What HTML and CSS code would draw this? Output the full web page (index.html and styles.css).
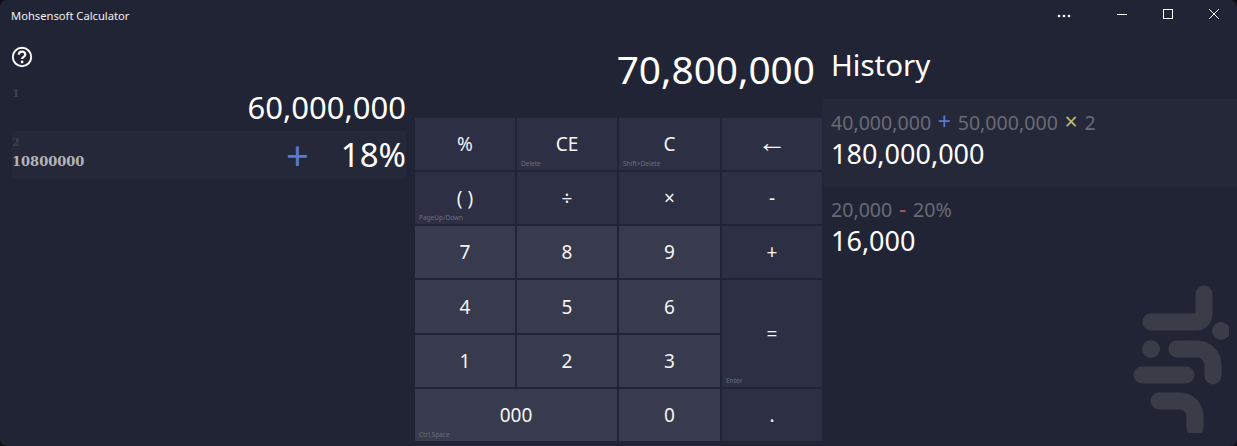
FILE: index.html
```html
<!DOCTYPE html>
<html lang="en">
<head>
    <meta charset="UTF-8">
    <meta name="viewport" content="width=device-width, initial-scale=1.0">
    <title>Mohsensoft Calculator</title>
    <link rel="stylesheet" href="styles.css">
</head>
<body>
    <div class="app">
        <header class="titlebar">
            <div class="app-title">Mohsensoft Calculator</div>
            <button class="win-btn more-btn">
                <svg width="14" height="4" viewBox="0 0 14 4"><circle cx="2" cy="2" r="1.3"/><circle cx="7" cy="2" r="1.3"/><circle cx="12" cy="2" r="1.3"/></svg>
            </button>
            <button class="win-btn">
                <svg width="12" height="12" viewBox="0 0 12 12"><path d="M1 6.5h10" class="win-line"/></svg>
            </button>
            <button class="win-btn">
                <svg width="12" height="12" viewBox="0 0 12 12"><rect x="1.5" y="1.5" width="9" height="9" class="win-line"/></svg>
            </button>
            <button class="win-btn">
                <svg width="12" height="12" viewBox="0 0 12 12"><path d="M1 1l10 10M11 1L1 11" class="win-line"/></svg>
            </button>
        </header>

        <main class="main">
            <section class="operands">
                <svg class="help-icon" width="22" height="22" viewBox="0 0 22 22">
                    <circle cx="11" cy="11" r="9.2" fill="none" stroke="#fff" stroke-width="1.9"/>
                    <path d="M7.8 8.8c0-2 1.4-3.2 3.3-3.2s3.2 1.2 3.2 2.9c0 2.5-3.2 2.4-3.2 4.6" fill="none" stroke="#fff" stroke-width="2.2"/>
                    <circle cx="11.1" cy="16" r="1.4" fill="#fff"/>
                </svg>
                <div class="operand operand-first">
                    <div class="operand-info">
                        <div class="operand-index">1</div>
                    </div>
                    <span class="operand-value">60,000,000</span>
                </div>
                <div class="operand operand-active">
                    <div class="operand-info">
                        <div class="operand-index">2</div>
                        <div class="operand-note">10800000</div>
                    </div>
                    <span class="operand-sign">+</span>
                    <span class="operand-value operand-percent">18%</span>
                </div>
            </section>

            <section class="calc">
                <div class="display">70,800,000</div>
                <div class="keypad">
                    <button class="key key-top">%</button>
                    <button class="key key-top">CE<span class="hint">Delete</span></button>
                    <button class="key key-top">C<span class="hint">Shift+Delete</span></button>
                    <button class="key key-top key-arrow">←</button>
                    <button class="key key-top">( )<span class="hint">PageUp/Down</span></button>
                    <button class="key key-top">÷</button>
                    <button class="key key-top">×</button>
                    <button class="key key-top">-</button>
                    <button class="key">7</button>
                    <button class="key">8</button>
                    <button class="key">9</button>
                    <button class="key key-top">+</button>
                    <button class="key">4</button>
                    <button class="key">5</button>
                    <button class="key">6</button>
                    <button class="key key-top key-equals">=<span class="hint">Enter</span></button>
                    <button class="key">1</button>
                    <button class="key">2</button>
                    <button class="key">3</button>
                    <button class="key key-wide">000<span class="hint">Ctrl,Space</span></button>
                    <button class="key">0</button>
                    <button class="key key-top">.</button>
                </div>
            </section>

            <section class="history">
                <h1 class="history-title">History</h1>
                <div class="history-item history-item-on">
                    <div class="history-expr">40,000,000 <span class="op op-plus">+</span> 50,000,000 <span class="op op-times">×</span> 2</div>
                    <div class="history-result">180,000,000</div>
                </div>
                <div class="history-item">
                    <div class="history-expr">20,000 <span class="op op-minus">-</span> 20%</div>
                    <div class="history-result">16,000</div>
                </div>
                <svg class="watermark" width="100" height="150" viewBox="0 0 100 150">
                    <g fill="none" stroke="#3a3c47" stroke-width="17" stroke-linecap="round" stroke-linejoin="round">
                        <path d="M75 11v20a8 8 0 0 1-8 8H22"/>
                        <path d="M48 66h20a16 16 0 0 1 16 16v11"/>
                        <path d="M13 92h44"/>
                        <path d="M30 118h21a15 15 0 0 1 15 15v12"/>
                    </g>
                    <circle cx="92" cy="48" r="9" fill="#3a3c47"/>
                    <circle cx="22" cy="66" r="9" fill="#3a3c47"/>
                </svg>
            </section>
        </main>
    </div>
</body>
</html>
```
FILE: styles.css
```css
html, body {
    margin: 0;
    height: 100%;
    overflow: hidden;
}
body {
    font-family: "Noto Sans", "Open Sans", sans-serif;
    background-color: #0e0f14;
    color: #fff;
}
.app {
    height: 446px;
    display: flex;
    flex-direction: column;
    background-color: #212434;
    border-radius: 7px;
}
.titlebar {
    height: 32px;
    flex: none;
    display: flex;
    align-items: flex-start;
}
.app-title {
    flex: 1;
    padding-left: 11px;
    font-size: 11.2px;
    line-height: 32px;
    color: #f2f2f2;
}
.win-btn {
    width: 46px;
    height: 28px;
    padding: 0;
    border: none;
    background: none;
    display: flex;
    align-items: center;
    justify-content: center;
}
.win-btn svg {
    fill: #fff;
}
.more-btn {
    height: 32px;
    margin-right: 12px;
}
.win-line {
    fill: none;
    stroke: #fff;
    stroke-width: 1;
}
.main {
    flex: 1;
    display: flex;
    min-height: 0;
}

/* left column */
.operands {
    width: 394px;
    padding: 14px 9px 0 12px;
    flex: none;
}
.help-icon {
    display: block;
    margin-left: -1px;
}
.operand {
    height: 47px;
    display: flex;
    align-items: center;
}
.operand-first {
    margin-top: 16px;
}
.operand-info {
    align-self: flex-start;
    margin-right: auto;
    padding-top: 5px;
}
.operand-first .operand-info {
    padding-top: 3px;
}
.operand-index {
    font-family: "DejaVu Serif", serif;
    font-weight: bold;
    font-size: 11px;
    line-height: 14px;
    color: #3d404e;
}
.operand-note {
    font-family: "DejaVu Serif", serif;
    font-weight: bold;
    font-size: 13px;
    line-height: 18px;
    margin-top: 3px;
    color: #b4b4b8;
}
.operand-sign {
    font-size: 40px;
    line-height: 47px;
    color: #5a78d8;
    margin-right: 32px;
}
.operand-value {
    font-size: 31px;
    line-height: 47px;
}
.operand-percent {
    font-size: 33px;
}
.operand-active {
    background-color: #252838;
}

/* keypad */
.calc {
    width: 407px;
    flex: none;
    display: flex;
    flex-direction: column;
}
.display {
    height: 86px;
    flex: none;
    box-sizing: border-box;
    padding-right: 7px;
    text-align: right;
    font-size: 38.8px;
    line-height: 74px;
}
.keypad {
    height: 323px;
    display: grid;
    grid-template-columns: 100px 100px 101px 100px;
    grid-template-rows: 52px 52px 52px 53px 52px 52px;
    gap: 2px;
}
.key {
    position: relative;
    padding: 0;
    border: none;
    background-color: #383b4e;
    color: #f5f5f5;
    font-family: inherit;
    font-size: 19px;
}
.key-top {
    background-color: #2d3045;
}
.key-arrow {
    font-size: 29px;
    line-height: 1;
    padding-bottom: 7px;
}
.key-equals {
    grid-column: 4;
    grid-row: 4 / span 2;
}
.key-wide {
    grid-column: span 2;
}
.hint {
    position: absolute;
    left: 4px;
    bottom: 2px;
    font-size: 6.5px;
    line-height: 9px;
    color: #6c6e7c;
}

/* right column */
.history {
    position: relative;
    flex: 1;
    margin-left: 1px;
}
.history-title {
    margin: 0;
    height: 67px;
    padding-left: 8px;
    font-size: 29.5px;
    font-weight: 400;
    line-height: 66px;
}
.history-item {
    height: 87px;
    box-sizing: border-box;
    padding: 11px 8px 0;
}
.history-item-on {
    background-color: #252838;
}
.history-expr {
    font-size: 19.6px;
    line-height: 26px;
    color: #686a76;
}
.history-result {
    font-size: 27px;
    line-height: 36px;
}
.op {
    font-size: 23px;
    line-height: 1;
    margin: 0 1.6px;
}
.op-plus {
    color: #5a78d8;
}
.op-times {
    color: #c9b66f;
}
.op-minus {
    color: #b0545c;
}
.watermark {
    position: absolute;
    right: 8px;
    bottom: 13px;
}
```
